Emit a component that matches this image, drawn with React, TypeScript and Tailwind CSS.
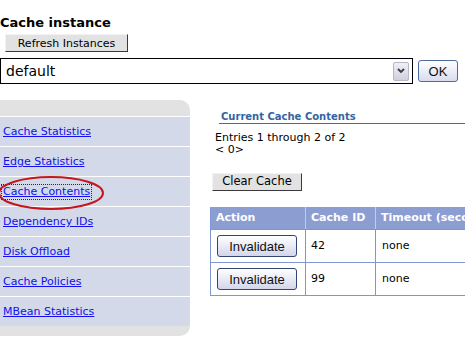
import React from "react";

const links = [
  "Cache Statistics",
  "Edge Statistics",
  "Cache Contents",
  "Dependency IDs",
  "Disk Offload",
  "Cache Policies",
  "MBean Statistics",
];

const entries = [
  { id: "42", timeout: "none" },
  { id: "99", timeout: "none" },
];

export default function App() {
  return (
    <div className="relative w-[465px] h-[339px] overflow-hidden bg-white text-black font-['DejaVu_Sans',Verdana,sans-serif] text-[11px]">
      {/* Instance picker */}
      <div className="pt-[15px] text-[13px] leading-[16px] font-bold">Cache instance</div>
      <button className="block ml-[5px] mt-[3px] w-[123px] h-[18px] bg-[#e2e2e2] border border-t-[#f2f2f2] border-l-[#f2f2f2] border-r-[#3a3a3a] border-b-[#3a3a3a] text-[11px] leading-none">
        Refresh Instances
      </button>
      <div className="flex items-center mt-[6px]">
        <div className="w-[413px] h-[26px] border border-black flex items-center pl-[5px] pr-[3px]">
          <span className="flex-1 text-[14px] leading-none">default</span>
          <span className="w-[16px] h-[19px] flex items-center justify-center border border-[#b4b8c6] rounded-[2px] bg-gradient-to-b from-[#f0f0f4] to-[#cfd1dc]">
            <svg width="8" height="6" viewBox="0 0 8 6">
              <polyline points="1,1 4,4 7,1" fill="none" stroke="#3a3a4a" strokeWidth="1.8" />
            </svg>
          </span>
        </div>
        <button className="ml-[5px] w-[40px] h-[22px] rounded-[3px] border border-[#4d6c9e] bg-gradient-to-b from-white to-[#d8dcee] font-['Liberation_Sans',Arial,sans-serif] text-[13px] leading-none text-[#111]">
          OK
        </button>
      </div>

      <div className="flex mt-[16px]">
        {/* Side navigation */}
        <div className="w-[190px] shrink-0 rounded-r-[10px] overflow-hidden bg-[#e2e2e2] pt-[16px] pb-[10px]">
          {links.map((l) => (
            <div key={l} className="h-[30px] border-t border-white bg-[#d3d9e9] flex items-center pl-[3px] pt-[1px]">
              {l === "Cache Contents" ? (
                <a className="inline-block leading-[14px] text-[#1010f0] underline outline-1 outline-dotted outline-[#1010f0] -ml-[1px] px-[1px]">
                  {l}
                </a>
              ) : (
                <a className="text-[#1010f0] underline leading-[14px]">{l}</a>
              )}
            </div>
          ))}
        </div>

        {/* Contents */}
        <div className="flex-1 pl-[20px]">
          <div className="ml-[9px] mt-[11px] pl-[2px] leading-[12px] text-[10px] font-bold text-[#3465a0] border-b border-[#3a6eae]">
            Current Cache Contents
          </div>
          <div className="ml-[5px] mt-[8px] leading-[12px]">
            <div>Entries 1 through 2 of 2</div>
            <div>&lt; 0&gt;</div>
          </div>
          <button className="block ml-[2px] mt-[17px] w-[90px] h-[18px] bg-[#e2e2e2] border border-t-[#f2f2f2] border-l-[#f2f2f2] border-r-[#3a3a3a] border-b-[#3a3a3a] text-[11.5px] leading-none">
            Clear Cache
          </button>

          <div className="mt-[16px] w-[330px] border-l border-b border-[#7f97cf]">
            <div className="flex h-[22px] bg-[#8c9dd2] text-white font-bold items-center">
              <div className="w-[95px] h-full flex items-center pl-[5px] border-r border-[#c3cbea]">Action</div>
              <div className="w-[70px] h-full flex items-center pl-[5px] border-r border-[#c3cbea]">Cache ID</div>
              <div className="flex-1 h-full flex items-center pl-[5px] whitespace-nowrap">Timeout (seconds)</div>
            </div>
            {entries.map((e) => (
              <div key={e.id} className="flex h-[33px] border-t border-[#7f97cf]">
                <div className="w-[95px] flex items-center pl-[6px] border-r border-[#7f97cf]">
                  <button className="w-[80px] h-[22px] rounded-[3px] border border-[#33466e] bg-gradient-to-b from-white to-[#d3d6ea] font-['Liberation_Sans',Arial,sans-serif] text-[13px] leading-none text-[#111]">
                    Invalidate
                  </button>
                </div>
                <div className="w-[70px] flex items-center pl-[5px] border-r border-[#7f97cf]">{e.id}</div>
                <div className="flex-1 flex items-center pl-[6px]">{e.timeout}</div>
              </div>
            ))}
          </div>
        </div>
      </div>

      {/* Red annotation circle */}
      <svg className="absolute left-[-4px] top-[175px]" width="110" height="36" viewBox="0 0 110 36">
        <ellipse cx="55" cy="18" rx="52" ry="16" fill="none" stroke="#c4161c" strokeWidth="2" />
      </svg>
    </div>
  );
}
